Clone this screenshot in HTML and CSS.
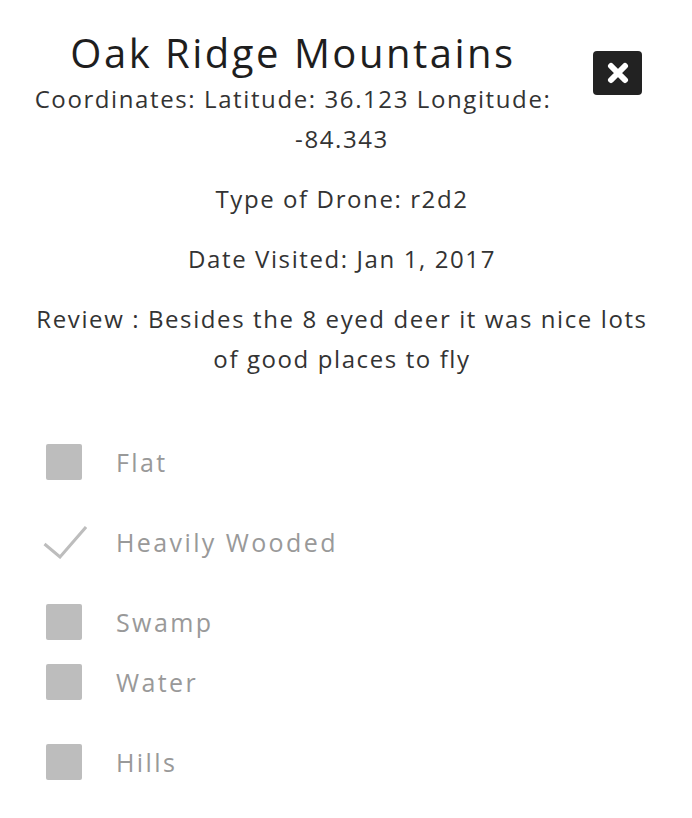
FILE: index.html
```html
<!DOCTYPE html>
<html lang="en">
<head>
<meta charset="utf-8">
<title>Oak Ridge Mountains</title>
<link rel="stylesheet" href="styles.css">
</head>
<body>
<div class="card">
  <button class="close" type="button" aria-label="Close">
    <svg class="close-icon" viewBox="0 0 22 22" width="22" height="22" aria-hidden="true">
      <path d="M4 4 L18 18 M18 4 L4 18" fill="none" stroke="#fff" stroke-width="6" stroke-linecap="round"/>
    </svg>
  </button>
  <h1 class="title">Oak Ridge Mountains</h1>
  <p class="info coords">Coordinates: Latitude: 36.123 Longitude: -84.343</p>
  <p class="info">Type of Drone: r2d2</p>
  <p class="info">Date Visited: Jan 1, 2017</p>
  <p class="info">Review : Besides the 8 eyed deer it was nice lots of good places to fly</p>

  <ul class="features">
    <li class="feature"><span class="box"></span><span class="label">Flat</span></li>
    <li class="feature"><svg class="check" viewBox="0 0 44 34" width="44" height="34" aria-hidden="true"><path d="M1.5 19 L17 32 L43 2" fill="none" stroke="#bdbdbd" stroke-width="3"/></svg><span class="label">Heavily Wooded</span></li>
    <li class="feature tight"><span class="box"></span><span class="label">Swamp</span></li>
    <li class="feature"><span class="box"></span><span class="label">Water</span></li>
    <li class="feature"><span class="box"></span><span class="label">Hills</span></li>
  </ul>
</div>
</body>
</html>
```
FILE: styles.css
```css
html, body {
  margin: 0;
  padding: 0;
  background: #fff;
}

body {
  font-family: "Open Sans", "Liberation Sans", sans-serif;
  color: #333;
}

.card {
  padding: 8px 30px 0 22px;
}

.close {
  float: right;
  width: 49px;
  height: 44px;
  margin: 43px 20px 10px 29px;
  padding: 0;
  border: 0;
  border-radius: 4px;
  background: #222;
  display: flex;
  align-items: center;
  justify-content: center;
}

.close-icon {
  display: block;
}

.title {
  margin: 21px 0 2px;
  font-size: 40px;
  line-height: 48px;
  font-weight: 400;
  letter-spacing: 2.5px;
  color: #1e1e1e;
  text-align: center;
}

.info {
  margin: 20px 0;
  font-size: 24px;
  line-height: 40px;
  letter-spacing: 1.6px;
  text-align: center;
}

.coords {
  margin-top: 0;
}

.features {
  list-style: none;
  margin: 53px 0 0;
  padding: 0 0 0 24px;
}

.feature {
  display: flex;
  align-items: center;
  height: 60px;
  margin-bottom: 20px;
}

.feature.tight {
  margin-bottom: 0;
}

.box {
  width: 36px;
  height: 36px;
  border-radius: 2px;
  background: #bdbdbd;
  flex: none;
}

.check {
  display: block;
  flex: none;
  margin: 0 -5px 0 -3px;
}

.label {
  margin-left: 34px;
  font-size: 25px;
  line-height: 40px;
  letter-spacing: 2.4px;
  color: #999;
}
```
